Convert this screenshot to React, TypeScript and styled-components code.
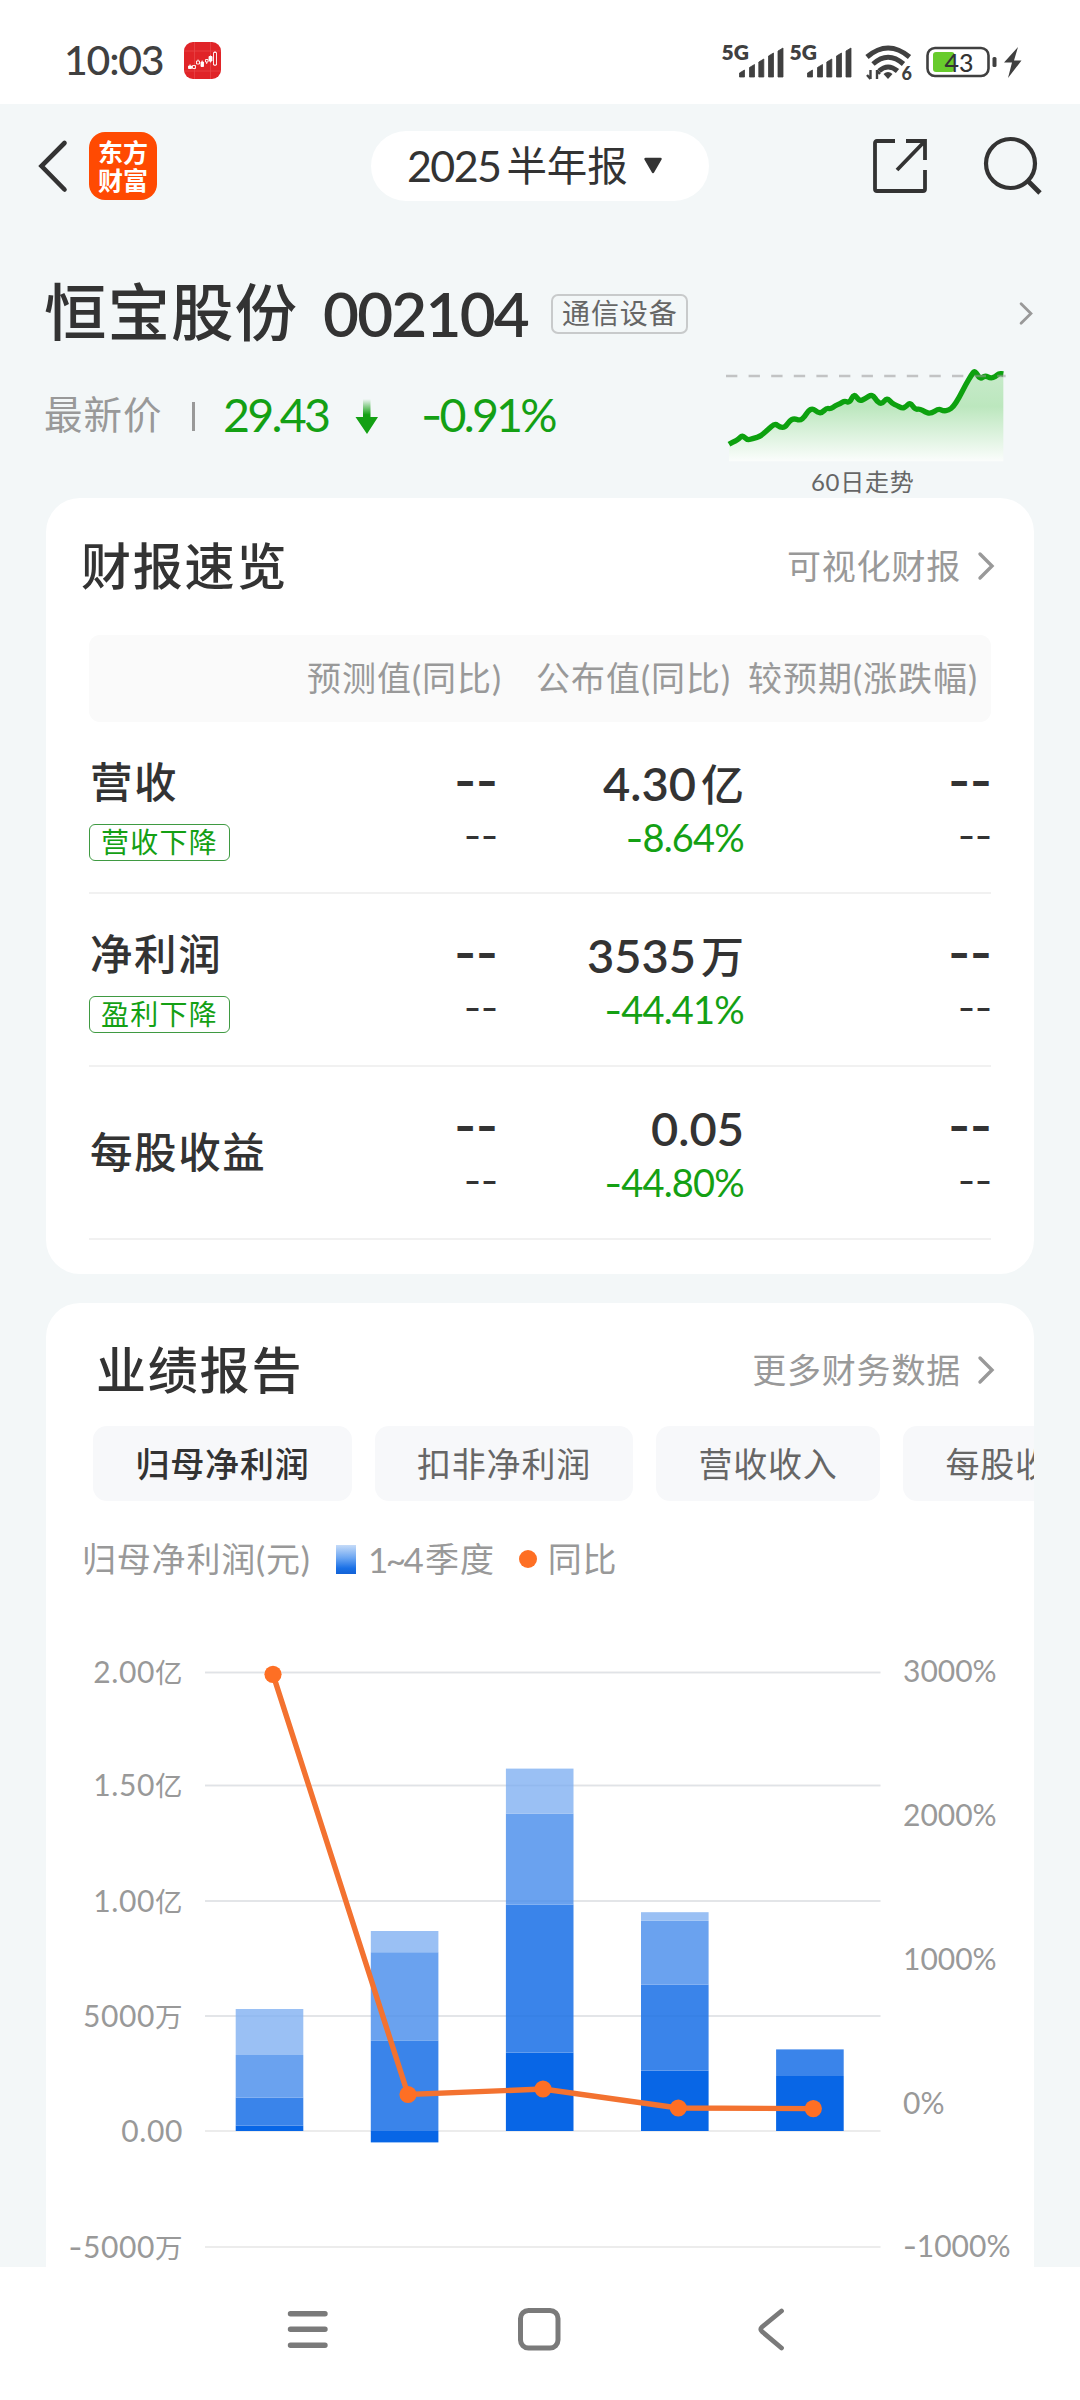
import React from "react";
import styled, { createGlobalStyle } from "styled-components";

const INK = "#333333";
const MUTED = "#999999";
const GREEN = "#14a014";

const GlobalStyle = createGlobalStyle`
  * { box-sizing: border-box; }
  body {
    margin: 0;
    background: #ffffff;
    color: ${INK};
    font-family: Lato, "Noto Sans CJK SC", sans-serif;
    font-kerning: none;
    white-space: nowrap;
  }
  svg { display: block; flex: none; overflow: visible; }
`;

const Screen = styled.div`
  width: 1080px;
  height: 2400px;
  display: flex;
  flex-direction: column;
  overflow: hidden;
`;

/* ---------- status bar ---------- */

const StatusBar = styled.header`
  flex: none;
  height: 104px;
  display: flex;
  align-items: center;
  padding: 16px 58px 0 64px;
`;

const Clock = styled.span`
  font-size: 41px;
  font-weight: 500;
  line-height: 60px;
  width: 120px;
  color: #404040;
  letter-spacing: -1.2px;
`;

const StatusIcons = styled.div`
  margin-left: auto;
  display: flex;
`;

/* ---------- page ---------- */

const Page = styled.main`
  flex: none;
  height: 2163px;
  background: #f3f7f8;
  overflow: hidden;
  display: flex;
  flex-direction: column;
`;

const TopBar = styled.div`
  flex: none;
  height: 124px;
  display: flex;
  align-items: center;
  padding: 0 36px 0 36px;
`;

const AppLogo = styled.div`
  width: 68px;
  height: 68px;
  margin-left: 20px;
  border-radius: 16px;
  background: #ff4a02;
  color: #ffffff;
  font-family: "Noto Sans CJK SC", sans-serif;
  font-size: 25px;
  font-weight: 700;
  padding-top: 5px;
  display: flex;
  flex-direction: column;
  align-items: center;
`;

const LogoLine = styled.span`
  height: 28px;
  line-height: 28px;
`;

const PeriodPill = styled.button`
  width: 338px;
  height: 70px;
  margin-left: 214px;
  padding: 0 0 0 36px;
  border: 0;
  border-radius: 35px;
  background: #ffffff;
  color: ${INK};
  display: flex;
  align-items: center;
  font: inherit;
  font-size: 40.5px;
  line-height: 66px;
`;

const PeriodYear = styled.span`
  font-size: 43px;
  letter-spacing: -1.6px;
  margin-right: 6px;
`;

const PeriodCaret = styled.svg`
  margin-left: 15px;
`;

const TopActions = styled.div`
  margin-left: auto;
  display: flex;
  align-items: center;
  gap: 54px;
`;

/* ---------- stock summary ---------- */

const Summary = styled.section`
  flex: none;
  height: 270px;
  display: flex;
  padding: 46px 46px 0 44px;
`;

const SummaryMain = styled.div`
  flex: 1;
`;

const StockLine = styled.div`
  display: flex;
  align-items: center;
  height: 80px;
`;

const StockName = styled.h1`
  flex: none;
  margin: 0;
  width: 256px;
  font-size: 62.5px;
  font-weight: 500;
  line-height: 76px;
  height: 80px;
  letter-spacing: 1px;
`;

const StockCode = styled.span`
  flex: none;
  margin-left: 23px;
  width: 228px;
  font-size: 62px;
  font-weight: 600;
  line-height: 78px;
  height: 80px;
  letter-spacing: -1.8px;
`;

const IndustryTag = styled.span`
  flex: none;
  width: 137px;
  height: 40px;
  padding-left: 9px;
  border: 2px solid #c8cacb;
  border-radius: 7px;
  color: #666666;
  font-size: 28px;
  line-height: 35px;
  letter-spacing: 0.9px;
`;

const PriceLine = styled.div`
  display: flex;
  align-items: center;
  height: 60px;
  margin-top: 32px;
  color: ${GREEN};
`;

const PriceLabel = styled.span`
  width: 148px;
  height: 60px;
  color: ${MUTED};
  font-size: 38.5px;
  line-height: 57px;
  letter-spacing: 1px;
`;

const PriceRule = styled.span`
  width: 3px;
  height: 29px;
  background: #999999;
`;

const Price = styled.span`
  margin-left: 28px;
  width: 132px;
  height: 60px;
  font-size: 46.5px;
  line-height: 57px;
  letter-spacing: -2.7px;
`;

const Change = styled.span`
  margin-left: 42px;
  height: 60px;
  font-size: 46.5px;
  line-height: 57px;
  letter-spacing: -2.8px;
`;

const Trend = styled.div`
  width: 320px;
  display: flex;
  flex-direction: column;
  padding-top: 28px;
`;

const TrendChevron = styled.div`
  display: flex;
  justify-content: flex-end;
  margin: 0 1px 35px 0;
`;

const TrendChart = styled.div`
  padding-left: 6px;
`;

const TrendLabel = styled.div`
  padding-left: 97px;
  font-size: 24px;
  line-height: 36px;
  letter-spacing: 0.7px;
  color: #666666;
`;

/* ---------- cards ---------- */

const Card = styled.section<{ $height: number; $gap?: number }>`
  flex: none;
  width: 988px;
  height: ${(p) => p.$height}px;
  margin: 0 46px ${(p) => p.$gap ?? 0}px;
  background: #ffffff;
  border-radius: 34px;
  overflow: hidden;
`;

const CardHead = styled.div<{ $left: number; $height: number; $top?: number }>`
  height: ${(p) => p.$height}px;
  display: flex;
  align-items: center;
  justify-content: space-between;
  padding: ${(p) => p.$top ?? 0}px 40px 0 ${(p) => p.$left}px;
`;

const CardTitle = styled.h2`
  margin: 0;
  font-size: 50px;
  font-weight: 500;
  line-height: 68px;
  padding-bottom: 2px;
  letter-spacing: 1.8px;
`;

const MoreLink = styled.a`
  display: flex;
  align-items: center;
  gap: 17px;
  color: ${MUTED};
  font-size: 34px;
  line-height: 48px;
  padding-bottom: 2px;
  letter-spacing: 0.8px;
`;

/* ---------- overview table ---------- */

const Table = styled.div`
  width: 902px;
  margin: 0 43px;
`;

const TableHead = styled.div`
  height: 87px;
  display: grid;
  grid-template-columns: 229px 212px auto;
  align-items: center;
  padding: 0 0 4px 218px;
  border-radius: 11px;
  background: #fafafa;
  color: ${MUTED};
  font-size: 34px;
  letter-spacing: 1px;
`;

const TableRow = styled.div<{ $first?: boolean }>`
  height: ${(p) => (p.$first ? 172 : 173)}px;
  display: grid;
  grid-template-columns: 165px 243px 247px 247px;
  border-bottom: 2px solid #f1f1f1;
`;

const RowName = styled.div<{ $single?: boolean }>`
  padding-top: ${(p) => (p.$single ? 55 : 30)}px;
  padding-left: 1px;
  font-size: 42.5px;
  font-weight: 500;
  line-height: 60px;
  letter-spacing: 1.6px;
`;

const TrendTag = styled.span`
  display: block;
  width: 141px;
  height: 37px;
  margin: 12px 0 0 -1px;
  border: 1.5px solid #3f9a42;
  border-radius: 6px;
  color: ${GREEN};
  font-size: 28px;
  font-weight: 400;
  line-height: 34px;
  letter-spacing: 1.2px;
  text-align: center;
`;

const Cell = styled.div`
  padding-top: 31px;
  text-align: right;
`;

const CellValue = styled.div`
  height: 60px;
  font-size: 47px;
  font-weight: 600;
  line-height: 60px;
  letter-spacing: 0;
`;

const Unit = styled.span`
  margin-left: 5px;
  font-size: 43px;
  font-weight: 500;
`;

const CellChange = styled.div`
  height: 50px;
  font-size: 38px;
  line-height: 48px;
  letter-spacing: -0.8px;
  color: ${GREEN};
`;

const Dashes = styled.div<{ $small?: boolean }>`
  height: ${(p) => (p.$small ? 50 : 60)}px;
  margin-right: -1px;
  font-family: Inter, sans-serif;
  font-size: ${(p) => (p.$small ? 37 : 47)}px;
  font-weight: ${(p) => (p.$small ? 400 : 600)};
  line-height: ${(p) => (p.$small ? 46 : 55)}px;
`;

const Minus = styled.span`
  font-family: Inter, sans-serif;
`;

/* ---------- report card ---------- */

const Tabs = styled.div`
  display: flex;
  padding-left: 47px;
  height: 75px;
  gap: 23px;
`;

const Tab = styled.button<{ $active?: boolean; $width: number }>`
  flex: none;
  width: ${(p) => p.$width}px;
  height: 75px;
  padding: 0;
  border: 0;
  border-radius: 14px;
  background: #f7f8fa;
  color: ${(p) => (p.$active ? INK : "#666666")};
  font: inherit;
  font-size: 34px;
  font-weight: ${(p) => (p.$active ? 500 : 400)};
  line-height: 70px;
  letter-spacing: 0.8px;
  text-align: center;
`;

const Legend = styled.div`
  display: flex;
  align-items: center;
  height: 60px;
  margin-top: 28px;
  padding-left: 36px;
  color: ${MUTED};
  font-size: 34px;
  line-height: 56px;
  letter-spacing: 0.8px;
`;

const LegendTitle = styled.span`
  width: 254px;
`;

const LegendBar = styled.span`
  width: 20px;
  height: 29px;
  margin-right: 12px;
  background: linear-gradient(#c5dbf8, #6aa5f2 45%, #1a70e6 80%, #1262d6);
`;

const LegendRange = styled.span`
  margin-right: 4px;
  font-size: 35px;
  letter-spacing: -2.6px;
`;

const LegendDot = styled.span`
  width: 18px;
  height: 18px;
  margin: 0 11px 0 24px;
  border-radius: 50%;
  background: #fe6f24;
`;

const AxisText = styled.text`
  font-size: 30px;
  fill: ${MUTED};
`;

/* ---------- navigation bar ---------- */

const NavBar = styled.nav`
  flex: none;
  height: 133px;
  display: flex;
  align-items: flex-start;
  padding: 38px 0 0 284px;
`;

const NavItem = styled.div<{ $width: number }>`
  width: ${(p) => p.$width}px;
`;

/* ---------- icons ---------- */

const Chevron = ({ small }: { small?: boolean }) => (
  <svg width={small ? 14 : 16} height={small ? 23 : 28} viewBox="0 0 16 28" fill="none" stroke="#999" strokeWidth="3.4">
    <path d="M2 2 L14 14 L2 26" strokeLinecap="round" />
  </svg>
);

const CandleIcon = () => (
  <svg width="37" height="37" viewBox="0 0 37 37">
    <rect width="37" height="37" rx="9" fill="#e02428" />
    <path d="M10.5 0V37M26.5 0V37M0 29H37M0 9H37" stroke="#e94a4c" strokeWidth="0.7" />
    <g fill="none" stroke="#fff" strokeWidth="0.9">
      <path d="M4.500 24h3v2.500h-3zM17 20h2.500v4.500h-2.500zM25 14.500h3v4.500h-3z" fill="#fff" />
      <path d="M8.500 23.500h3v3h-3zM12.500 19h3v3h-3zM21.500 17.500h2.500v2.500h-2.500zM29.500 10.500h3v12.500h-3zM6 22.500v1.500M14 17.500v1.500M18.200 18.500v6M22.700 20v2M26.500 13.500v7M31 9v1.500M31 23v1" />
    </g>
  </svg>
);

const signalBars = [
  [0, 7], [10, 12.5], [19.3, 18], [29, 24], [38.5, 29],
];

const Signal = ({ x }: { x: number }) => (
  <g transform={`translate(${x} 0)`}>
    <text x="-1" y="20" fontSize="21" fontWeight="800" fill="#404040">5G</text>
    {signalBars.map(([bx, h]) => (
      <path
        key={bx}
        d={`M${bx + 17} ${37 - h + 3} L${bx + 22} ${37 - h} V37 H${bx + 17} Z`}
        fill="#404040"
        stroke="#404040"
        strokeWidth="0.8"
        strokeLinejoin="round"
      />
    ))}
  </g>
);

const SystemIcons = () => (
  <svg width="300" height="40" viewBox="0 0 300 40">
    <Signal x={0.5} />
    <Signal x={68.5} />
    <g fill="none" stroke="#404040" strokeWidth="5">
      <path d="M145 17 Q166 -1 187.500 17" />
      <path d="M151 24 Q166 10.500 181.500 24" />
      <path d="M157 31 Q166 23 175.500 31" />
    </g>
    <path d="M161.500 34 Q166 30 170.500 34 L166 39 Z" fill="#404040" />
    <path d="M148.500 30V39M155 30V39M148.500 39L145 35M155 30.500L158 34" stroke="#404040" strokeWidth="2.400" fill="none" />
    <text x="179.500" y="40" fontSize="18" fontWeight="900" fill="#404040">6</text>
    <rect x="205.500" y="8" width="61" height="28" rx="7.500" fill="none" stroke="#404040" strokeWidth="2.600" />
    <rect x="211" y="12" width="21.500" height="20" rx="3" fill="#67cb2c" />
    <rect x="270.500" y="17" width="4" height="10" rx="1.500" fill="#404040" />
    <text x="222.500" y="31.500" fontSize="25" fontWeight="500" fill="#333">43</text>
    <path d="M296 7L282 22.500H290L286 38L299.500 20.500H292Z" fill="#404040" />
  </svg>
);

const BackIcon = () => (
  <svg width="33" height="56" viewBox="0 0 33 56" fill="none" stroke={INK} strokeWidth="4.600">
    <path d="M28.500 5 L5.500 28 L28.500 51.500" strokeLinecap="round" />
  </svg>
);

const ShareIcon = () => (
  <svg width="56" height="56" viewBox="0 0 56 56" fill="none" stroke={INK} strokeWidth="3.800">
    <path d="M23 3H5Q3 3 3 5V51Q3 53 5 53H51Q53 53 53 51V32" />
    <path d="M34 3H53V22M53 3L25 32" />
  </svg>
);

const SearchIcon = () => (
  <svg width="62" height="62" viewBox="0 0 62 62" fill="none" stroke={INK} strokeWidth="4.200">
    <circle cx="28.500" cy="28.500" r="24.500" />
    <path d="M46 46L58 58" strokeWidth="4.800" />
  </svg>
);

const DownArrow = () => (
  <svg width="24" height="38" viewBox="0 0 24 38">
    <defs>
      <linearGradient id="arrowFade" x1="0" y1="0" x2="0" y2="1">
        <stop offset="0" stopColor={GREEN} stopOpacity="0" />
        <stop offset="0.45" stopColor={GREEN} />
      </linearGradient>
    </defs>
    <path d="M8 2H15.500V20H23L12 37L0.500 20H8Z" fill="url(#arrowFade)" />
  </svg>
);

/* 60 day closing line, three units to the pixel */
const trendPoints: [number, number][] = [
  [147, 553], [160, 545], [175, 539], [187, 525], [202, 541], [220, 535], [242, 529],
  [262, 510], [285, 490], [300, 502], [315, 502], [328, 483], [342, 475], [360, 482], [374, 470],
  [384, 453], [398, 445], [412, 457], [425, 459], [440, 444], [452, 447], [466, 437],
  [480, 431], [494, 422], [509, 429], [522, 400], [538, 424], [556, 416], [577, 402],
  [592, 426], [606, 432], [621, 413], [636, 430], [650, 436], [667, 445], [678, 440], [690, 427],
  [706, 449], [719, 446], [735, 456], [752, 461], [776, 446], [790, 453], [806, 451], [820, 440],
  [836, 415], [858, 372], [875, 344], [885, 331], [900, 358], [915, 346], [932, 355],
  [946, 350], [957, 340], [970, 342],
];

const smooth = (pts: [number, number][]) => {
  let d = `M${pts[0][0]} ${pts[0][1]}`;
  for (let i = 1; i < pts.length - 1; i++) {
    const mx = (pts[i][0] + pts[i + 1][0]) / 2;
    const my = (pts[i][1] + pts[i + 1][1]) / 2;
    d += ` Q${pts[i][0]} ${pts[i][1]} ${mx} ${my}`;
  }
  const last = pts[pts.length - 1];
  return `${d} L${last[0]} ${last[1]}`;
};

const Sparkline = () => {
  const line = smooth(trendPoints);
  return (
    <svg width="290" height="104" viewBox="120 300 870 312">
      <defs>
        <linearGradient id="trendFill" x1="0" y1="330" x2="0" y2="604" gradientUnits="userSpaceOnUse">
          <stop offset="0" stopColor="#c8ebcb" />
          <stop offset="0.4" stopColor="#bce7be" />
          <stop offset="1" stopColor="#fbfdfc" />
        </linearGradient>
      </defs>
      <path d={`${line} V604 H147 Z`} fill="url(#trendFill)" />
      <path d={line} fill="none" stroke="#0da10f" strokeWidth="16" strokeLinejoin="round" />
      <path d="M138 348H977" stroke="#999" strokeOpacity="0.55" strokeWidth="8" strokeDasharray="34 33.800" />
    </svg>
  );
};

/* ---------- chart ---------- */

const grid = [
  { y: 1672.5, label: "2.00亿" },
  { y: 1785.5, label: "1.50亿" },
  { y: 1901, label: "1.00亿" },
  { y: 2016, label: "5000万" },
  { y: 2131, label: "0.00" },
  { y: 2247, label: "-5000万" },
];

const percentAxis = [
  { y: 1671, label: "3000%" },
  { y: 1815, label: "2000%" },
  { y: 1959, label: "1000%" },
  { y: 2103, label: "0%" },
  { y: 2246, label: "-1000%" },
];

const shades = ["#0866e6", "#3a84ea", "#6aa2ef", "#9ac0f4"];

/* segment edges from the first quarter upwards */
const bars = [
  [2131, 2125.7, 2097.5, 2055, 2009],
  [2142.4, 2131, 2040.4, 1952.2, 1931],
  [2131, 2052.6, 1904.5, 1813.5, 1768.6],
  [2131, 2070.6, 1984.5, 1920.8, 1912.2],
  [2131, 2076, 2049.4],
];

const ratio: [number, number][] = [
  [273, 1674.3], [408, 2094.5], [543, 2089], [678.3, 2108], [813.3, 2108.6],
];

const AxisLabel = ({ text, x, y, end }: { text: string; x: number; y: number; end?: boolean }) => (
  <AxisText x={x} y={y + 11} textAnchor={end ? "end" : "start"} letterSpacing={end ? 0.6 : 0}>
    {text.startsWith("-") ? <tspan fontFamily="Inter">-</tspan> : null}
    {text.replace("-", "").replace(/[亿万]/, "")}
    {/[亿万]/.test(text) ? <tspan fontSize="27.500">{text.slice(-1)}</tspan> : null}
  </AxisText>
);

const ProfitChart = () => (
  <svg width="988" height="690" viewBox="46 1589 988 690">
    {grid.map((g) => (
      <React.Fragment key={g.label}>
        <path d={`M205 ${g.y}H880.500`} stroke="#ececec" strokeWidth="2" />
        <AxisLabel text={g.label} x={183} y={g.y - 0.5} end />
      </React.Fragment>
    ))}
    {percentAxis.map((p) => (
      <AxisLabel key={p.label} text={p.label} x={903} y={p.y} />
    ))}
    {bars.map((edges, i) =>
      edges.slice(1).map((top, q) => (
        <rect key={`${i}-${q}`} x={235.7 + i * 135.1} y={top} width="67.600" height={edges[q] - top} fill={shades[q]} />
      ))
    )}
    {grid.slice(0, 4).map((g) => (
      <path key={g.y} d={`M205 ${g.y}H880.500`} stroke="#003a90" strokeOpacity="0.05" strokeWidth="1.500" />
    ))}
    <polyline points={ratio.map((p) => p.join(",")).join(" ")} fill="none" stroke="#f37230" strokeWidth="5.400" />
    {ratio.map(([cx, cy]) => (
      <circle key={cx} cx={cx} cy={cy} r="8.600" fill="#fe6f24" />
    ))}
  </svg>
);

/* ---------- data ---------- */

const rows = [
  { name: "营收", tag: "营收下降", value: "4.30", unit: "亿", change: "8.64%" },
  { name: "净利润", tag: "盈利下降", value: "3535", unit: "万", change: "44.41%" },
  { name: "每股收益", tag: "", value: "0.05", unit: "", change: "44.80%" },
];

const tabs = [
  { name: "归母净利润", width: 259 },
  { name: "扣非净利润", width: 258 },
  { name: "营收收入", width: 224 },
  { name: "每股收益", width: 224 },
];

const EmptyCell = () => (
  <Cell>
    <Dashes>--</Dashes>
    <Dashes $small>--</Dashes>
  </Cell>
);

export default function App() {
  return (
    <Screen>
      <GlobalStyle />
      <StatusBar>
        <Clock>10:03</Clock>
        <CandleIcon />
        <StatusIcons>
          <SystemIcons />
        </StatusIcons>
      </StatusBar>

      <Page>
        <TopBar>
          <BackIcon />
          <AppLogo>
            <LogoLine>东方</LogoLine>
            <LogoLine>财富</LogoLine>
          </AppLogo>
          <PeriodPill>
            <PeriodYear>2025</PeriodYear>半年报
            <PeriodCaret width="20" height="18" viewBox="0 0 20 18">
              <path d="M2.500 2H17.500L10 15Z" fill={INK} stroke={INK} strokeWidth="2.500" strokeLinejoin="round" />
            </PeriodCaret>
          </PeriodPill>
          <TopActions>
            <ShareIcon />
            <SearchIcon />
          </TopActions>
        </TopBar>

        <Summary>
          <SummaryMain>
            <StockLine>
              <StockName>恒宝股份</StockName>
              <StockCode>002104</StockCode>
              <IndustryTag>通信设备</IndustryTag>
            </StockLine>
            <PriceLine>
              <PriceLabel>最新价</PriceLabel>
              <PriceRule />
              <Price>29.43</Price>
              <DownArrow />
              <Change>
                <Minus>-</Minus>0.91%
              </Change>
            </PriceLine>
          </SummaryMain>
          <Trend>
            <TrendChevron>
              <Chevron small />
            </TrendChevron>
            <TrendChart>
              <Sparkline />
            </TrendChart>
            <TrendLabel>60日走势</TrendLabel>
          </Trend>
        </Summary>

        <Card $height={776} $gap={29}>
          <CardHead $left={35} $height={137}>
            <CardTitle>财报速览</CardTitle>
            <MoreLink>
              可视化财报
              <Chevron />
            </MoreLink>
          </CardHead>
          <Table>
            <TableHead>
              <span>预测值(同比)</span>
              <span>公布值(同比)</span>
              <span>较预期(涨跌幅)</span>
            </TableHead>
            {rows.map((row, i) => (
              <TableRow key={row.name} $first={i === 0}>
                <RowName $single={!row.tag}>
                  {row.name}
                  {row.tag && <TrendTag>{row.tag}</TrendTag>}
                </RowName>
                <EmptyCell />
                <Cell>
                  <CellValue>
                    {row.value}
                    {row.unit && <Unit>{row.unit}</Unit>}
                  </CellValue>
                  <CellChange>
                    <Minus>-</Minus>
                    {row.change}
                  </CellChange>
                </Cell>
                <EmptyCell />
              </TableRow>
            ))}
          </Table>
        </Card>

        <Card $height={1040}>
          <CardHead $left={50} $height={123} $top={12}>
            <CardTitle>业绩报告</CardTitle>
            <MoreLink>
              更多财务数据
              <Chevron />
            </MoreLink>
          </CardHead>
          <Tabs>
            {tabs.map((tab, i) => (
              <Tab key={tab.name} $active={i === 0} $width={tab.width}>
                {tab.name}
              </Tab>
            ))}
          </Tabs>
          <Legend>
            <LegendTitle>归母净利润(元)</LegendTitle>
            <LegendBar />
            <LegendRange>1~4</LegendRange>
            <span>季度</span>
            <LegendDot />
            <span>同比</span>
          </Legend>
          <ProfitChart />
        </Card>
      </Page>

      <NavBar>
        <NavItem $width={231}>
          <svg width="48" height="48" viewBox="0 0 48 48" stroke="#7a7a7a" strokeWidth="5.400" strokeLinecap="round">
            <path d="M6.500 8.700H41M6.500 24.300H41M6.500 40.300H41" />
          </svg>
        </NavItem>
        <NavItem $width={236}>
          <svg width="48" height="48" viewBox="0 0 48 48" fill="none" stroke="#7a7a7a" strokeWidth="5">
            <rect x="5.500" y="5.500" width="37.500" height="37.500" rx="8" />
          </svg>
        </NavItem>
        <NavItem $width={48}>
          <svg width="48" height="48" viewBox="0 0 48 48" fill="none" stroke="#7a7a7a" strokeWidth="4.800" strokeLinecap="round" strokeLinejoin="round">
            <path d="M30.500 6L11 22Q8.500 24.300 11 26.500L30.500 43" />
          </svg>
        </NavItem>
      </NavBar>
    </Screen>
  );
}
